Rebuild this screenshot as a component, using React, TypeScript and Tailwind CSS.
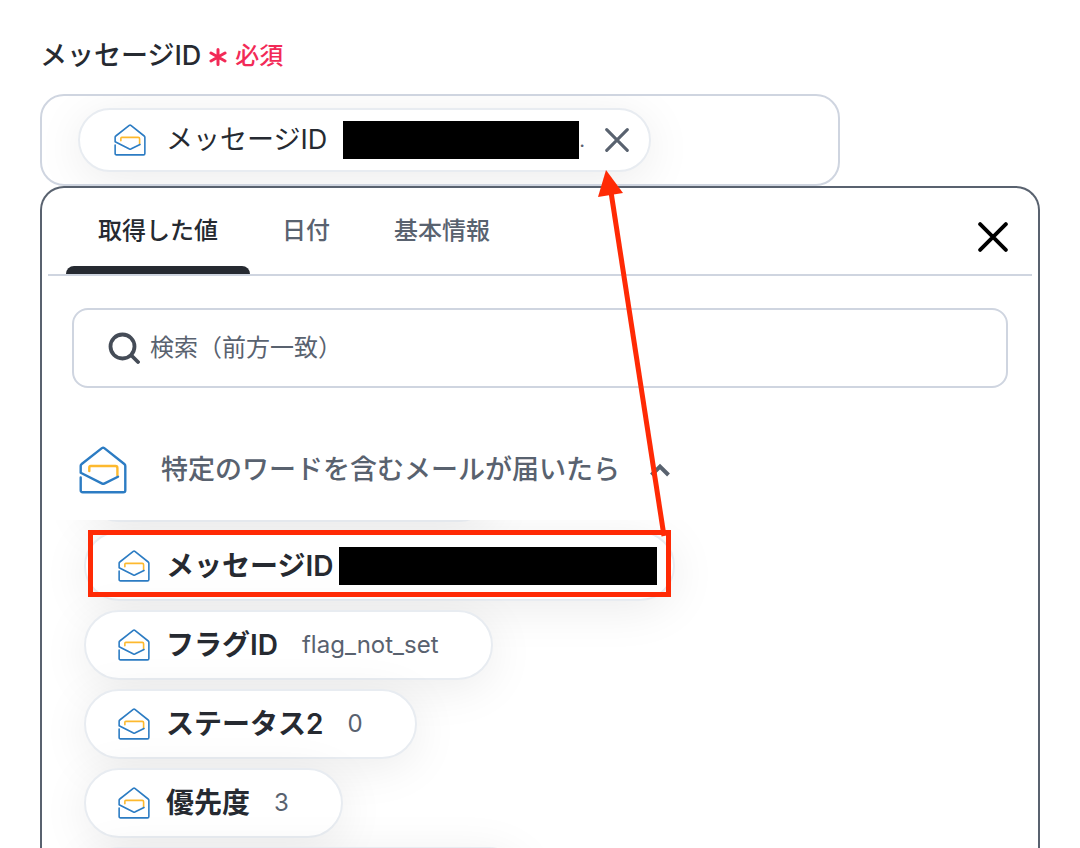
import { useState } from "react";

interface ValueItem {
  id: string;
  title: string;
  value?: string;
  redacted?: boolean;
}

const tabs = ["取得した値", "日付", "基本情報"];

const items: ValueItem[] = [
  { id: "message", title: "メッセージID", redacted: true },
  { id: "flag", title: "フラグID", value: "flag_not_set" },
  { id: "status", title: "ステータス2", value: "0" },
  { id: "priority", title: "優先度", value: "3" },
];

const pill =
  "shrink-0 rounded-full border-2 border-[#e8ecf1] bg-white shadow-[0_8px_48px_rgba(0,0,0,0.08)]";

function MailIcon({ className }: { className?: string }) {
  return (
    <svg
      viewBox="0 0 48 48"
      fill="none"
      strokeWidth="2.4"
      strokeLinecap="round"
      strokeLinejoin="round"
      className={className}
      aria-hidden="true"
    >
      <path
        d="M10.3 25V21.5Q10.3 20 11.8 20H36.4Q38.4 20 38.4 22V29.5"
        stroke="#fdb92e"
      />
      <path
        d="M39 30.7L25.2 37.6Q24.2 38 23.2 37.6L1.7 26.7V19.8Q1.7 18.7 2.7 18L22.9 2.1Q24.1 1.2 25.3 2.1L45.3 18Q46.3 18.8 46.3 20V44.2Q46.3 46.3 44.2 46.3H3.8Q1.7 46.3 1.7 44.2V31.5"
        stroke="#2c7cc3"
      />
    </svg>
  );
}

function CrossIcon({ className }: { className?: string }) {
  return (
    <svg
      viewBox="0 0 28 28"
      fill="none"
      stroke="currentColor"
      strokeWidth="3.6"
      strokeLinecap="round"
      className={className}
      aria-hidden="true"
    >
      <path d="M2 2L26 26M26 2L2 26" />
    </svg>
  );
}

function ValuePill({ item }: { item: ValueItem }) {
  return (
    <button
      type="button"
      className={`${pill} flex h-[70px] items-center pl-8 ${
        item.redacted ? "pr-4" : "pr-[52px]"
      }`}
    >
      <MailIcon className="size-8" />
      <span className="ml-4 text-[28px] leading-10 font-semibold text-[#262a31]">
        {item.title}
      </span>
      {item.redacted ? (
        <span className="ml-1.5 h-[38px] w-[318px] bg-black" />
      ) : (
        <span className="ml-6 text-2xl text-[#59626f]">{item.value}</span>
      )}
    </button>
  );
}

// Red frame around the first value and the arrow up to the selected chip
function Annotation() {
  return (
    <svg
      width="1080"
      height="848"
      viewBox="0 0 1080 848"
      className="pointer-events-none absolute top-0 left-0"
      aria-hidden="true"
    >
      <rect
        x="90.5"
        y="532.5"
        width="578"
        height="62"
        fill="none"
        stroke="#ff2a05"
        strokeWidth="5"
      />
      <path d="M664 536L611 192" stroke="#ff2a05" strokeWidth="5" />
      <path d="M606 170L598 197L623 193Z" fill="#ff2a05" />
    </svg>
  );
}

export default function App() {
  const [activeTab, setActiveTab] = useState(tabs[0]);

  return (
    <main className="relative flex h-screen flex-col overflow-hidden bg-white px-10 pt-9 font-['Inter','Noto_Sans_CJK_JP',sans-serif] text-[#262a31]">
      <div className="flex h-[58px] shrink-0 items-start">
        <span className="text-[27px] leading-10 font-medium">メッセージID</span>
        <svg
          viewBox="0 0 18 18"
          fill="none"
          stroke="#f22a57"
          strokeWidth="3"
          strokeLinecap="round"
          className="mt-3 ml-2 size-[18px]"
          aria-hidden="true"
        >
          <path d="M9 1.5V16.5M2 5L16 13M16 5L2 13" />
        </svg>
        <span className="ml-2 text-2xl leading-10 font-medium text-[#f22a57]">
          必須
        </span>
      </div>

      <div className="flex h-[92px] w-4/5 shrink-0 items-center overflow-hidden rounded-3xl border-2 border-[#cfd5e0] px-9">
        <div className={`${pill} flex h-16 items-center pr-5 pl-[34px]`}>
          <MailIcon className="size-8" />
          <span className="ml-5 text-[27px] leading-10">メッセージID</span>
          <span className="ml-4 h-[38px] w-[236px] bg-black" />
          <span className="text-xl leading-5 text-[#59626f]">.</span>
          <button
            type="button"
            aria-label="削除"
            className="ml-5 text-[#59626f]"
          >
            <CrossIcon className="size-6" />
          </button>
        </div>
      </div>

      <section className="flex min-h-0 flex-1 flex-col rounded-t-3xl border-2 border-b-0 border-[#59626f]">
        <div className="mx-1.5 flex h-[88px] shrink-0 items-stretch border-b-2 border-[#cfd5e0] pr-6 pl-[18px]">
          <div role="tablist" className="flex flex-1">
            {tabs.map((tab) => (
              <button
                key={tab}
                type="button"
                role="tab"
                aria-selected={tab === activeTab}
                onClick={() => setActiveTab(tab)}
                className={`flex flex-col items-center text-2xl font-medium ${
                  tab === activeTab ? "text-[#262a31]" : "text-[#59626f]"
                }`}
              >
                <span className="flex flex-1 items-center px-8 pt-2">
                  {tab}
                </span>
                <span
                  className={`h-2 w-full rounded-t-lg ${
                    tab === activeTab ? "bg-[#262a31]" : ""
                  }`}
                />
              </button>
            ))}
          </div>
          <button type="button" aria-label="閉じる" className="pt-3 text-black">
            <CrossIcon className="size-[30px]" />
          </button>
        </div>

        <label className="mx-[30px] mt-8 flex h-20 shrink-0 items-center rounded-2xl border-2 border-[#cfd5e0] px-[34px]">
          <svg
            viewBox="0 0 32 32"
            fill="none"
            stroke="#454c57"
            strokeWidth="3.8"
            strokeLinecap="round"
            className="size-8 shrink-0"
            aria-hidden="true"
          >
            <circle cx="14.5" cy="14.5" r="12" />
            <path d="M23.5 23.5L30 30" />
          </svg>
          <input
            type="text"
            aria-label="検索（前方一致）"
            placeholder="検索（前方一致）"
            className="ml-2.5 min-w-0 flex-1 text-2xl outline-none placeholder:text-[#59626f]"
          />
        </label>

        <button
          type="button"
          className="flex h-[132px] shrink-0 items-center self-start pt-8 pl-[37px]"
        >
          <MailIcon className="size-12" />
          <span className="ml-[34px] text-[27px] leading-10 font-medium text-[#59626f]">
            特定のワードを含むメールが届いたら
          </span>
          <svg
            viewBox="0 0 20 14"
            fill="none"
            stroke="#59626f"
            strokeWidth="4"
            className="ml-[30px] h-3.5 w-5"
            aria-hidden="true"
          >
            <path d="M1.5 12L10 3.5L18.5 12" />
          </svg>
        </button>

        <div className="flex min-h-0 flex-1 flex-col items-start gap-[9px] overflow-y-clip pl-[42px]">
          <div className={`${pill} -mt-[68px] h-[70px] w-[410px]`} />
          {items.map((item) => (
            <ValuePill key={item.id} item={item} />
          ))}
          <div className={`${pill} h-[70px] w-[440px]`} />
        </div>
      </section>

      <Annotation />
    </main>
  );
}
